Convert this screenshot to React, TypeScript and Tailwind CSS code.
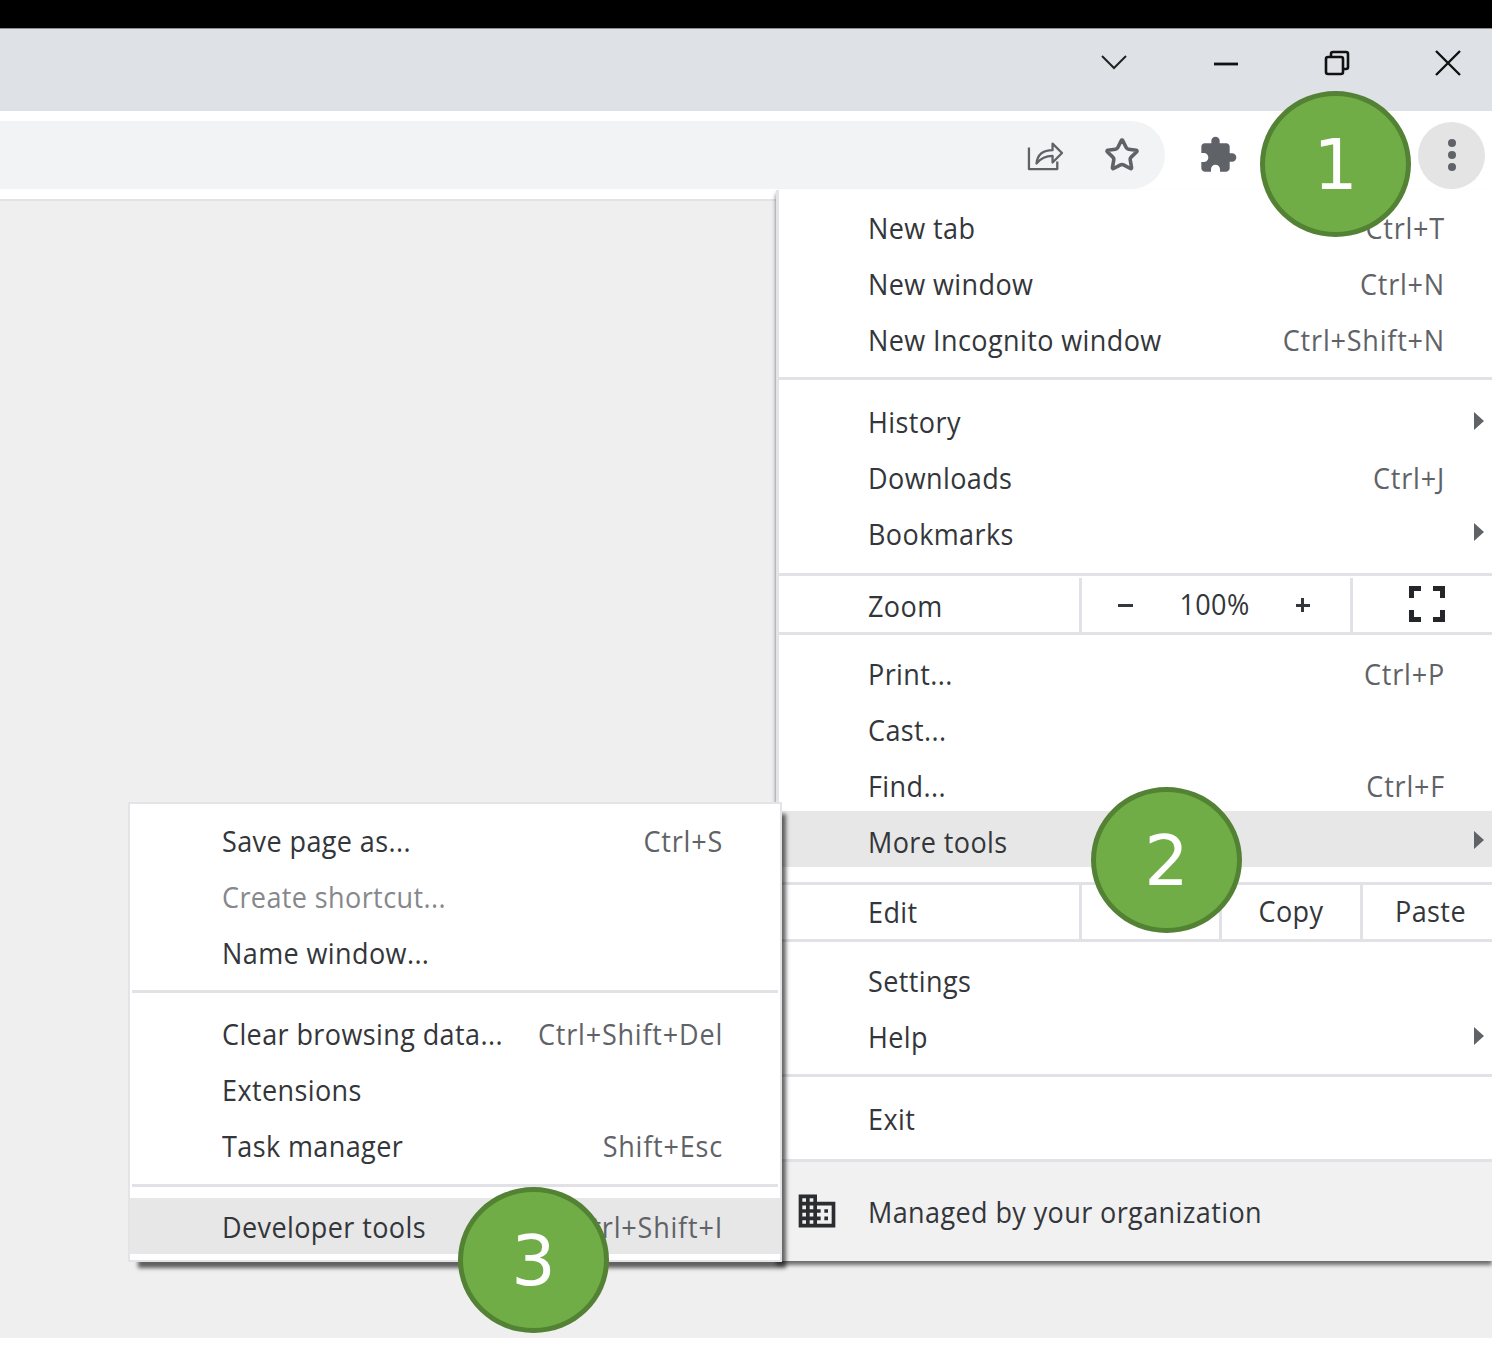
import { Star } from 'lucide-react';
import { MdDomain, MdExtension } from 'react-icons/md';

const FONT = "font-['Open_Sans',sans-serif]";

function Row({ label, shortcut, arrow, active, disabled, className = '', left = 'pl-[89px]', right = 'pr-[47px]' }: {
  label: string;
  shortcut?: string;
  arrow?: boolean;
  active?: boolean;
  disabled?: boolean;
  className?: string;
  left?: string;
  right?: string;
}) {
  return (
    <div className={`relative h-[55.7px] shrink-0 flex items-center justify-between ${left} ${right} ${active ? 'bg-[#e7e7e7] pt-[4px]' : 'pb-[2px]'} ${className}`}>
      <Label text={label} className={disabled ? 'text-[#85888c]' : 'text-[#33363a]'} />
      {shortcut && <Label text={shortcut} className="text-[#5f6368] tracking-[0.8px]" />}
      {arrow && (
        <span className={`absolute right-[8px] -translate-y-1/2 w-0 h-0 border-y-[9px] border-y-transparent border-l-[10px] border-l-[#5f6368] ${active ? 'top-[29px]' : 'top-[26px]'}`} />
      )}
    </div>
  );
}

function Label({ text, className = '' }: { text: string; className?: string }) {
  return <span className={`text-[27px] leading-none tracking-[0.4px] whitespace-nowrap scale-y-[1.05] ${className}`}>{text}</span>;
}

function Sep({ className = '' }: { className?: string }) {
  return <div className={`h-[3px] shrink-0 bg-[#e2e2e6] ${className}`} />;
}

function Badge({ n, className }: { n: number; className: string }) {
  return (
    <div className={`absolute w-[151px] h-[146px] rounded-[50%] bg-[#70ad47] border-[5px] border-[#548235] flex items-center justify-center text-white font-['DejaVu_Sans',sans-serif] text-[70px] leading-none pt-[2px] ${className}`}>
      {n}
    </div>
  );
}

export default function App() {
  return (
    <div className={`relative w-[1492px] h-[1359px] overflow-hidden bg-white ${FONT}`}>
      {/* window chrome */}
      <div className="h-[28px] bg-black" />
      <div className="h-[83px] bg-[#dee1e6] border-t border-[#8d8f93] flex items-center justify-end text-black">
        <div className="flex items-center mb-[15px]">
          <svg width="30" height="20" viewBox="0 0 30 20" fill="none" stroke="#222" strokeWidth="2" className="mr-[82px]">
            <path d="M3 3l12 12L27 3" />
          </svg>
          <svg width="30" height="20" viewBox="0 0 30 20" fill="none" stroke="#111" strokeWidth="2.8" className="mr-[83px]">
            <path d="M3 11h24" />
          </svg>
          <svg width="26" height="26" viewBox="0 0 26 26" fill="none" stroke="#111" strokeWidth="2.6" className="mr-[84px]">
            <rect x="2" y="7" width="17" height="17" rx="2" />
            <path d="M7 7V4a2 2 0 0 1 2-2h13a2 2 0 0 1 2 2v13a2 2 0 0 1-2 2h-3" />
          </svg>
          <svg width="28" height="28" viewBox="0 0 28 28" fill="none" stroke="#111" strokeWidth="2.4" className="mr-[30px]">
            <path d="M2 2l24 24M26 2L2 26" />
          </svg>
        </div>
      </div>

      {/* toolbar */}
      <div className="h-[78px] bg-white flex items-end">
        <div className="w-[1165px] h-[68px] bg-[#f1f3f4] rounded-r-[34px] flex items-center justify-end pr-[25px] gap-[40px] text-[#5f6368]">
          <svg width="38" height="34" viewBox="0 0 40 36" fill="none" stroke="#5f6368" strokeWidth="2.4" strokeLinejoin="round" className="mb-[3px]">
            <path d="M3 11v23h30v-8" />
            <path d="M11 28c1-9 7-14 17-14V7l10 10-10 10v-7c-7 0-12 2-17 8z" />
          </svg>
          <Star size={36} strokeWidth={2.4} />
        </div>
        <div className="flex-1 flex items-center justify-between h-[68px] pl-[33px] pr-[7px]">
          <MdExtension size={40} className="text-[#5f6368]" />
          <div className="w-[67px] h-[67px] rounded-full bg-[#e4e4e4] flex flex-col items-center justify-center gap-[4px]">
            <span className="w-[8px] h-[8px] rounded-full bg-[#5f6368]" />
            <span className="w-[8px] h-[8px] rounded-full bg-[#5f6368]" />
            <span className="w-[8px] h-[8px] rounded-full bg-[#5f6368]" />
          </div>
        </div>
      </div>

      {/* page */}
      <div className="mt-[10px] h-[1139px] bg-[#efefef] border-t-2 border-[#e3e3e3]" />

      {/* main menu */}
      <div className="absolute left-[776px] top-[190px] w-[716px] h-[1071px] bg-white border-l-[3px] border-[#e4e4e8] shadow-[0_4px_4px_rgba(0,0,0,0.55)] flex flex-col">
        <div className="h-[11px] shrink-0" />
        <Row label="New tab" shortcut="Ctrl+T" />
        <Row label="New window" shortcut="Ctrl+N" />
        <Row label="New Incognito window" shortcut="Ctrl+Shift+N" />
        <Sep className="mt-[9px] mb-[15px]" />
        <Row label="History" arrow />
        <Row label="Downloads" shortcut="Ctrl+J" />
        <Row label="Bookmarks" arrow />
        <Sep className="mt-[11px]" />
        <div className="h-[56px] shrink-0 flex items-center pt-[2px]">
          <div className="w-[303px] h-full flex items-center pl-[89px] border-r-[3px] border-[#e2e2e6]">
            <Label text="Zoom" className="text-[#33363a]" />
          </div>
          <div className="w-[271px] h-full flex items-center justify-between pl-[36px] pr-[40px] border-r-[3px] border-[#e2e2e6] text-[#33363a]">
            <span className="w-[15px] h-[3px] bg-[#33363a]" />
            <Label text="100%" className="mb-[4px]" />
            <span className="relative w-[14px] h-[14px]">
              <span className="absolute left-0 top-[5.5px] w-[14px] h-[3px] bg-[#33363a]" />
              <span className="absolute left-[5.5px] top-0 w-[3px] h-[14px] bg-[#33363a]" />
            </span>
          </div>
          <div className="flex-1 flex items-center justify-center pl-[8px]">
            <svg width="36" height="36" viewBox="0 0 36 36" fill="none" stroke="#24262a" strokeWidth="5" className="mb-[3px]">
              <path d="M2.5 12V2.5h9.5M24 2.5h9.5V12M33.5 24v9.5H24M12 33.5H2.5V24" />
            </svg>
          </div>
        </div>
        <Sep className="mb-[12px]" />
        <Row label="Print..." shortcut="Ctrl+P" />
        <Row label="Cast..." />
        <Row label="Find..." shortcut="Ctrl+F" />
        <Row label="More tools" arrow active className="-mt-[3px]" />
        <Sep className="mt-[15px]" />
        <div className="h-[54px] shrink-0 flex items-center">
          <div className="w-[303px] h-full flex items-center pl-[89px] border-r-[3px] border-[#e2e2e6]">
            <Label text="Edit" className="text-[#33363a]" />
          </div>
          <div className="w-[140px] h-full border-r-[3px] border-[#e2e2e6]" />
          <div className="w-[141px] h-full flex items-center justify-center border-r-[3px] border-[#e2e2e6]">
            <Label text="Copy" className="text-[#33363a] mb-[3px]" />
          </div>
          <div className="flex-1 flex items-center justify-center pl-[6px]">
            <Label text="Paste" className="text-[#33363a] mb-[3px]" />
          </div>
        </div>
        <Sep className="mb-[12px]" />
        <Row label="Settings" />
        <Row label="Help" arrow />
        <Sep className="mt-[9px] mb-[14px]" />
        <Row label="Exit" />
        <Sep className="mt-[12px]" />
        <div className="flex-1 bg-[#f1f1f1] flex items-center pl-[16px] gap-[29px]">
          <MdDomain size={44} className="text-[#2b2d30]" />
          <Label text="Managed by your organization" className="text-[#33363a]" />
        </div>
      </div>

      {/* more tools submenu */}
      <div className="absolute left-[128px] top-[802px] w-[654px] h-[460px] bg-white border-2 border-[#e4e4e8] shadow-[7px_9px_4px_-3px_rgba(0,0,0,0.6)] flex flex-col">
        <div className="h-[10px] shrink-0" />
        <Row label="Save page as..." shortcut="Ctrl+S" left="pl-[92px]" right="pr-[57px]" />
        <Row label="Create shortcut..." disabled left="pl-[92px]" right="pr-[57px]" />
        <Row label="Name window..." left="pl-[92px]" right="pr-[57px]" />
        <Sep className="mt-[9px] mb-[14px] mx-[2px]" />
        <Row label="Clear browsing data..." shortcut="Ctrl+Shift+Del" left="pl-[92px]" right="pr-[57px]" />
        <Row label="Extensions" left="pl-[92px]" right="pr-[57px]" />
        <Row label="Task manager" shortcut="Shift+Esc" left="pl-[92px]" right="pr-[57px]" />
        <Sep className="mt-[10px] mb-[11px] mx-[2px]" />
        <Row label="Developer tools" shortcut="Ctrl+Shift+I" active left="pl-[92px]" right="pr-[57px]" className="!pt-[2px]" />
      </div>

      <Badge n={1} className="left-[1260px] top-[91px]" />
      <Badge n={2} className="left-[1091px] top-[787px]" />
      <Badge n={3} className="left-[458px] top-[1187px]" />
    </div>
  );
}
